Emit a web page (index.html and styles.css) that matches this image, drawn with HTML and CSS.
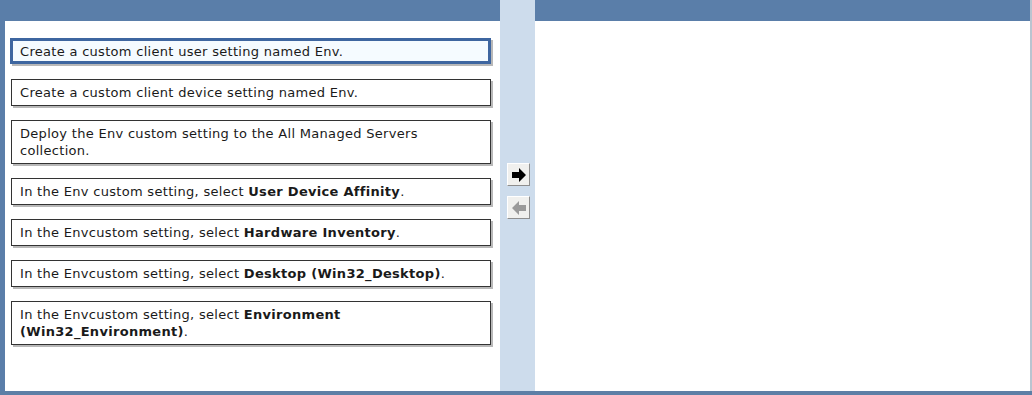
FILE: index.html
```html
<!DOCTYPE html>
<html lang="en">
<head>
  <meta charset="UTF-8">
  <title>Drag and drop answer</title>
  <link rel="stylesheet" href="styles.css">
</head>
<body>

<div class="board">
  <div class="panel source">
    <div class="panel-head"></div>
    <div class="panel-body">
      <div class="item selected">Create a custom client user setting named Env.</div>
      <div class="item">Create a custom client device setting named Env.</div>
      <div class="item">Deploy the Env custom setting to the All Managed Servers<br>collection.</div>
      <div class="item">In the Env custom setting, select <b>User Device Affinity</b>.</div>
      <div class="item">In the Envcustom setting, select <b>Hardware Inventory</b>.</div>
      <div class="item">In the Envcustom setting, select <b>Desktop (Win32_Desktop)</b>.</div>
      <div class="item">In the Envcustom setting, select <b>Environment<br>(Win32_Environment)</b>.</div>
    </div>
  </div>

  <div class="divider">
    <button class="move" title="Move right">
      <svg width="16" height="16" viewBox="0 0 16 16"><path d="M1 5h7V1l7 7-7 7v-4H1z" fill="#000"/></svg>
    </button>
    <button class="move" title="Move left">
      <svg width="16" height="16" viewBox="0 0 16 16"><path d="M15 5H8V1L1 8l7 7v-4h7z" fill="#9a9a9a"/></svg>
    </button>
  </div>

  <div class="panel target">
    <div class="panel-head"></div>
    <div class="panel-body"></div>
  </div>
</div>

</body>
</html>
```

FILE: styles.css
```css
body {
  margin: 0;
  font-family: 'DejaVu Sans', Verdana, sans-serif;
  font-size: 13px;
  color: #1a1a1a;
  background-color: #fff;
}

.board {
  display: flex;
  height: 395px;
  border-bottom: 4px solid #5d7fa6;
  box-sizing: border-box;
}

.panel {
  display: flex;
  flex-direction: column;
}

.panel-head {
  height: 21px;
  background-color: #5a7ea9;
}

.panel-body {
  flex: 1;
  background-color: #fff;
}

.source {
  width: 495px;
  border-left: 5px solid #5a7ea9;
}

.source .panel-body {
  padding: 17px 0 0 5px;
}

.target {
  flex: 1;
  border-right: 2px solid #b9c4d0;
}

.divider {
  width: 35px;
  background-color: #cddcec;
  display: flex;
  flex-direction: column;
  align-items: center;
  padding-top: 163px;
  gap: 10px;
}

.move {
  width: 23px;
  height: 23px;
  padding: 0;
  margin-left: 2px;
  background-color: #f0f0ee;
  border: 1px solid;
  border-color: #fff #8e8e8e #8e8e8e #fff;
  display: flex;
  align-items: center;
  justify-content: center;
  cursor: pointer;
}

.item {
  width: 463px;
  margin: 0 0 14px 1px;
  padding: 4px 7px 4px 8px;
  line-height: 17px;
  border: 1px solid #333;
  background-color: #fff;
  box-shadow: 2px 2px 0 #b8b8b8;
  letter-spacing: 0.3px;
}

.item.selected {
  margin: 0 0 15px 0;
  padding: 2px 6px 1px 7px;
  border: 3px solid #3e66a0;
  background-color: #f5fbff;
  width: 462px;
}
```
